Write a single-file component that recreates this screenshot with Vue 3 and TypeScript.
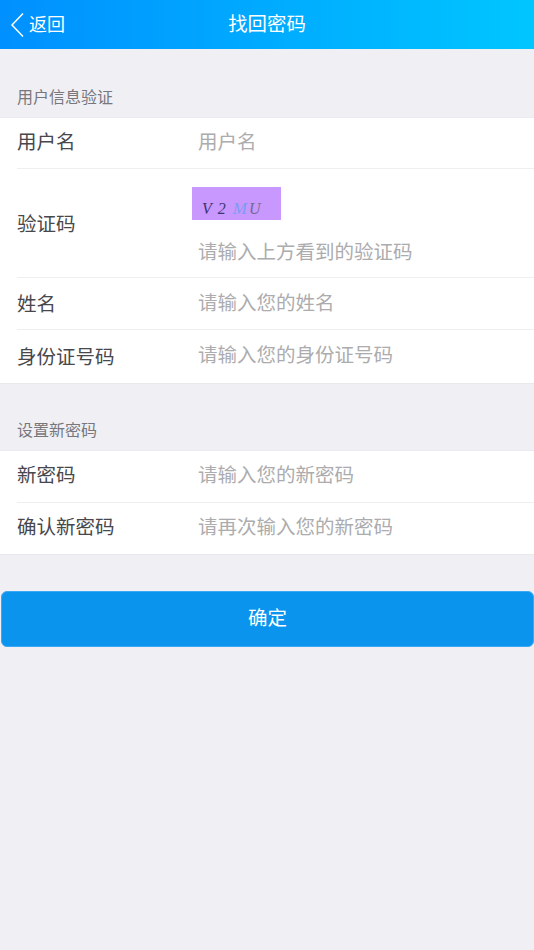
<script setup lang="ts">
interface Field { label: string; placeholder: string; captcha?: boolean; cls?: string }
const userFields: Field[] = [
  { label: '用户名', placeholder: '用户名', cls: 'short' },
  { label: '验证码', placeholder: '请输入上方看到的验证码', captcha: true },
  { label: '姓名', placeholder: '请输入您的姓名', cls: 'low' },
  { label: '身份证号码', placeholder: '请输入您的身份证号码', cls: 'long' },
]
const pwdFields: Field[] = [
  { label: '新密码', placeholder: '请输入您的新密码' },
  { label: '确认新密码', placeholder: '请再次输入您的新密码', cls: 'low' },
]
</script>

<template>
  <div class="page">
    <header class="bar">
      <div class="back">
        <svg class="chev" width="14" height="26" viewBox="0 0 14 26"><path d="M13 1.5 L2 13 L13 24.5" fill="none" stroke="#fff" stroke-width="1.5" /></svg>
        <span class="back-text">返回</span>
      </div>
      <div class="title">找回密码</div>
    </header>

    <div class="sec first">用户信息验证</div>
    <div class="group">
      <div v-for="f in userFields" :key="f.label" class="row" :class="[f.cls, { tall: f.captcha }]">
        <div class="label">{{ f.label }}</div>
        <div class="value">
          <div v-if="f.captcha" class="captcha">
            <i>V</i><i>2</i><i class="blue">M</i><i class="grey">U</i>
          </div>
          <div class="ph">{{ f.placeholder }}</div>
        </div>
      </div>
    </div>

    <div class="sec second">设置新密码</div>
    <div class="group">
      <div v-for="f in pwdFields" :key="f.label" class="row">
        <div class="label">{{ f.label }}</div>
        <div class="value"><div class="ph">{{ f.placeholder }}</div></div>
      </div>
    </div>

    <button class="ok" type="button"><span class="ok-text">确定</span></button>
  </div>
</template>

<style>
html, body { margin: 0; background: #efeff4; }
</style>

<style scoped>
.page {
  width: 534px;
  height: 950px;
  overflow: hidden;
  background: #efeff4;
  font-family: "Noto Sans CJK SC", "Liberation Sans", sans-serif;
}
.bar {
  position: relative;
  height: 49px;
  display: flex;
  align-items: center;
  justify-content: center;
  color: #fff;
  background: linear-gradient(90deg, #0090ff, #00c6ff);
}
.title { font-size: 19.4px; line-height: 30px; padding-bottom: 4px; }
.back {
  position: absolute;
  left: 10px;
  top: 0;
  height: 49px;
  display: flex;
  align-items: center;
  font-size: 18px;
}
.back-text { padding-bottom: 4px; }
.chev { margin-right: 5px; }
.sec {
  font-size: 16px;
  line-height: 20px;
  color: #77777c;
  padding-left: 17px;
}
.sec.first { padding-top: 37px; padding-bottom: 11px; }
.sec.second { padding-top: 35px; padding-bottom: 11px; }
.group {
  background: #fff;
  border-top: 1px solid #ebebef;
  border-bottom: 1px solid #e9e9ec;
}
.row {
  margin-left: 17px;
  display: flex;
  align-items: center;
  height: 51px;
  border-bottom: 1px solid #efeff1;
}
.row:last-child { border-bottom: 0; }
.row.short { height: 50px; }
.row.long { height: 53px; }
.row.tall { height: 108px; }
.label {
  width: 181px;
  flex: none;
  font-size: 19.5px;
  line-height: 30px;
  padding-bottom: 5px;
  color: #48484c;
}
.value { flex: 1; padding-bottom: 5px; }
.row.low .label { padding-bottom: 1px; }
.row.low .value { padding-bottom: 3px; }
.row.long .label { padding-bottom: 2px; }
.row.tall .value { padding: 6px 0 0; }
.row.tall .label { padding-bottom: 0; }
.ph {
  font-size: 19.5px;
  line-height: 30px;
  color: #acacae;
}
.captcha {
  width: 89px;
  height: 33px;
  margin: 0 0 16px -6px;
  background: #c898fe;
  display: flex;
  align-items: flex-end;
  padding: 0 0 1px 10px;
  box-sizing: border-box;
  gap: 6px;
  font-family: "Liberation Serif", serif;
  font-size: 16px;
  line-height: 20px;
  color: #3d3570;
}
.captcha i:nth-child(3) { font-size: 17px; margin-left: 1px; }
.captcha i:nth-child(4) { margin-left: -4px; }
.blue { color: #7d9cf2; }
.grey { color: #75688e; }
.ok {
  display: block;
  margin: 36px 0 0 1px;
  width: 533px;
  height: 56px;
  border: 1px solid #3aa8f2;
  border-radius: 6px;
  background: #0a94ee;
  color: #fff;
  font-family: inherit;
  font-size: 19.5px;
  padding: 0;
}
.ok-text { display: block; line-height: 30px; padding-bottom: 5px; }
</style>
